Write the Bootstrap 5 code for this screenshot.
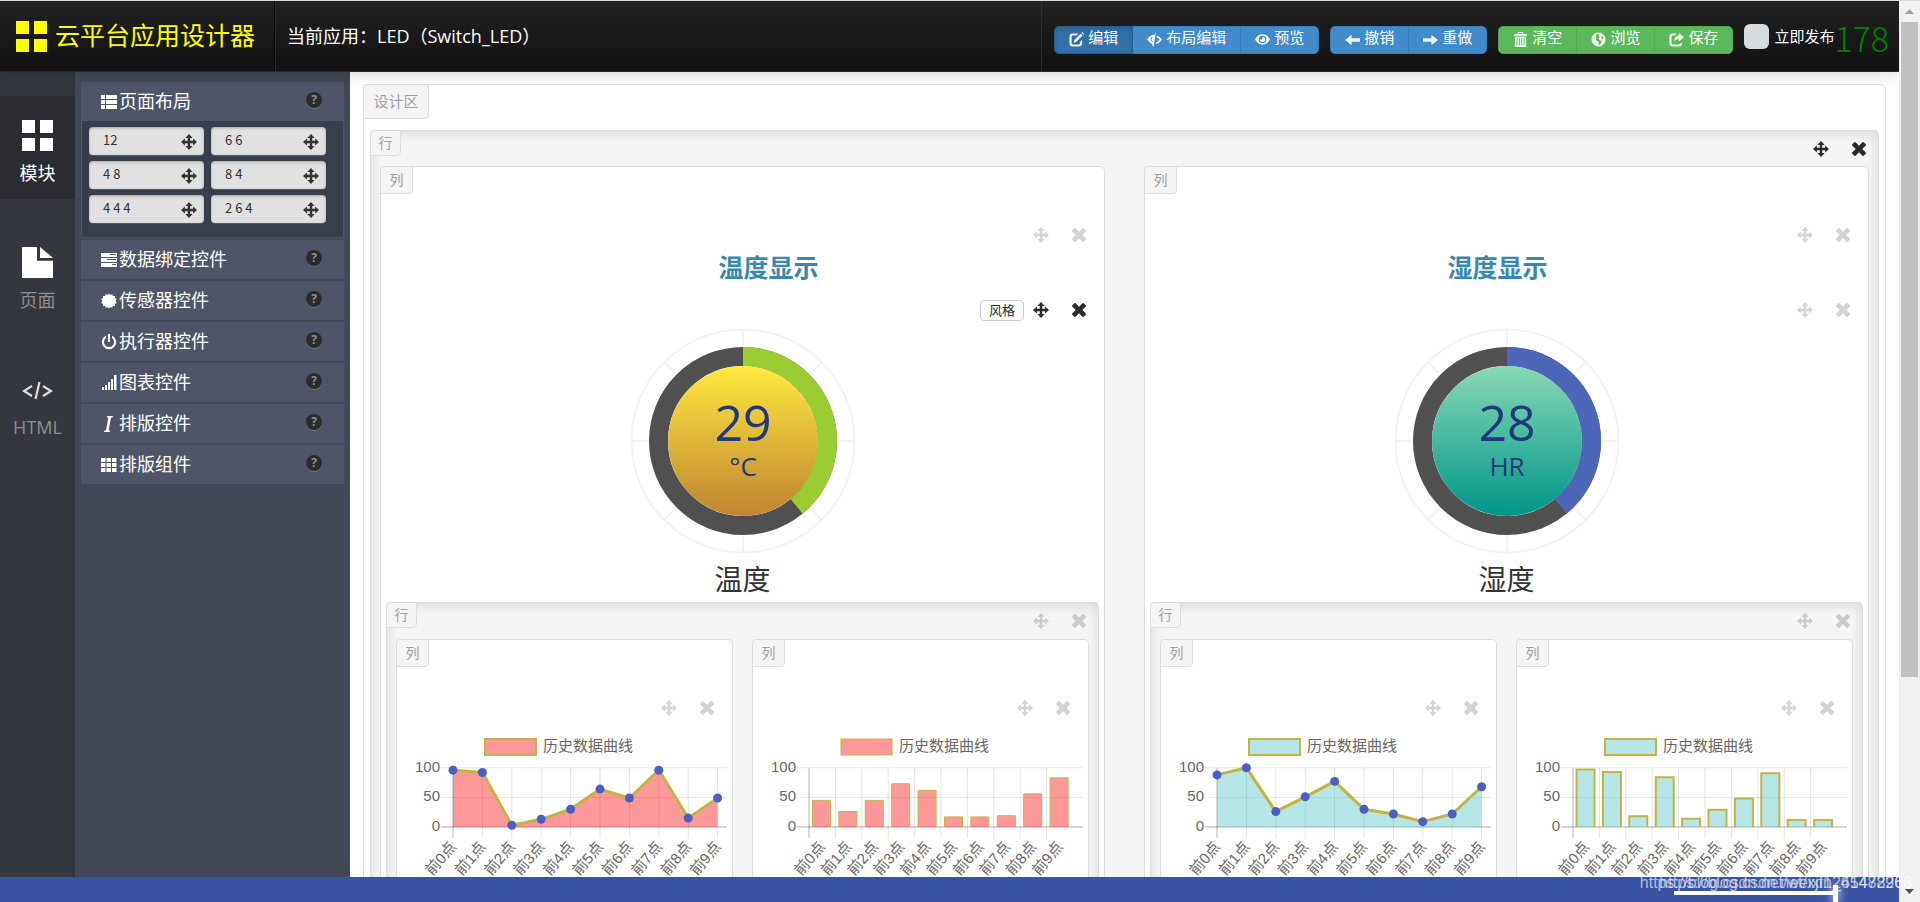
<!DOCTYPE html>
<html lang="zh-CN">
<head>
<meta charset="utf-8">
<meta name="viewport" content="width=device-width, initial-scale=1">
<title>云平台应用设计器</title>
<link href="https://cdn.jsdelivr.net/npm/bootstrap@5.3.0/dist/css/bootstrap.min.css" rel="stylesheet">
<style>
  body { font-family: "Open Sans", "Noto Sans CJK SC", sans-serif; color: #333; background: #fff; border-top: 1px solid #d9dde1; }
  svg { display: block; flex: none; }
  .ico { width: 15px; height: 15px; fill: currentColor; }

  /* top bar */
  .topbar { height: 71px; background: linear-gradient(#222, #111); border-bottom: 1px solid #2b2326; box-shadow: 0 2px 14px rgba(0,0,0,.16); z-index: 3; color: #fff; }
  .brand { color: #ff0; font-size: 25px; width: 275px; padding-left: 16px; gap: 8px; text-decoration: none; border-right: 1px solid #060606; }
  .brand svg { width: 31px; height: 31px; fill: #ff0; }
  .app-name { font-size: 18px; padding-left: 11px; border-left: 1px solid #2e2e2e; }
  .actions { padding: 0 10px 0 12px; border-left: 1px solid #2e2e2e; }
  .actions .btn { --bs-btn-padding-x: 14px; --bs-btn-padding-y: 0; height: 28px; font-size: 15px; line-height: 20px; color: #fff; display: flex; align-items: center; gap: 4px; padding-bottom: 6px; white-space: nowrap; }
  .actions .btn .ico { margin-top: 5px; opacity: .92; }
  .btn-ocean { --bs-btn-bg: #428bca; --bs-btn-border-color: #357ebd; --bs-btn-active-bg: #3071a9; --bs-btn-active-border-color: #285e8e; --bs-btn-border-radius: 5px; }
  .btn-leaf { --bs-btn-bg: #5cb85c; --bs-btn-border-color: #4cae4c; --bs-btn-border-radius: 5px; }
  .btn-ocean.active { box-shadow: inset 0 3px 5px rgba(0,0,0,.125); }
  .gap-groups { gap: 11px; }
  .publish { gap: 5px; font-size: 15px; white-space: nowrap; padding-bottom: 3px; }
  .publish .form-check-input { width: 25px; height: 25px; margin: 0; background-color: #d6dbdf; border: 0; border-radius: 6px; }
  .counter { font-family: "Noto Sans CJK SC", sans-serif; font-weight: 300; font-size: 34px; line-height: 34px; color: green; }

  /* side rail */
  .rail { width: 75px; background: #35373f; padding-top: 24px; gap: 24px; flex: none; }
  .rail a { height: 103px; padding-top: 24px; color: #8f8f8f; font-size: 18px; line-height: 26px; text-decoration: none; gap: 9px; }
  .rail a.active { background: #2b2c31; color: #fff; }
  .rail svg { width: 31px; height: 31px; fill: #fff; }

  /* component palette */
  .palette { width: 275px; background: #424855; padding: 10px 6px; gap: 2px; flex: none; }
  .group-head { height: 39px; background: #4f5566; color: #fff; font-size: 18px; padding: 0 22px 0 20px; border: 0; width: 100%; gap: 2px; white-space: nowrap; }
  .group-head .ico { width: 16px; height: 16px; }
  .help-dot { width: 16px; height: 16px; border-radius: 50%; background: #2c2c2c; color: #8a909e; font-size: 12px; line-height: 16px; font-weight: 700; text-align: center; margin: 0 0 4px auto; box-shadow: 0 1px 0 #6b7183; }
  .group-body { background: #393e4c; border: 1px solid #4f5566; border-top: 0; display: grid; grid-template-columns: 115px 115px; gap: 6px 7px; padding: 6px 7px 14px; margin-top: -2px; }
  .grid-chip { height: 28px; background: #e1e1e1; border: 0; border-radius: 4px; color: #333; font: 13px/24px "Noto Sans CJK SC", sans-serif; padding: 0 7px 2px 14px; box-shadow: inset 0 1px 3px rgba(0,0,0,.25), 0 1px 0 #4f5a6c; }
  .grid-chip .ico { width: 16px; height: 16px; margin-top: 4px; }

  /* design surface */
  .surface { padding: 12px 13px 0; overflow: hidden; min-width: 0; }
  .board { border: 1px solid #ddd; border-radius: 5px; padding-bottom: 30px; min-height: 100%; }
  .tag { background: #f5f5f5; border: 1px solid #ddd; border-radius: 4px 0 4px 0; color: #9da0a4; font-size: 14px; margin: -1px 0 0 -1px; display: inline-block; text-align: center; }
  .tag-board { font-size: 15px; width: 66px; height: 35px; line-height: 33px; }
  .tag-row { width: 31px; height: 26px; line-height: 24px; margin-left: -10px; }
  .tag-col { width: 33px; height: 28px; line-height: 25px; }
  .frame-row { background: #f5f5f5; border: 1px solid #ddd; border-radius: 5px; padding: 0 9px 20px; box-shadow: inset 0 2px 14px rgba(0,0,0,.12); }
  .board > .frame-row { margin: 11px 6px 0; }
  .frame-row > header { height: 35px; padding-right: 3px; }
  .cell .frame-row > header { height: 36px; }
  .cells { display: grid; grid-template-columns: 1fr 1fr; gap: 39px; }
  .cells .cells { gap: 19px; }
  .cell { background: #fff; border: 1px solid #ddd; border-radius: 5px; min-width: 0; padding-bottom: 16px; }
  .cell > .frame-row { margin: 0 5px; }
  .cell > header { height: 56px; }
  .tools { height: 24px; gap: 22px; padding-right: 17px; }
  .tools .ico { width: 16px; height: 16px; }
  .frame-row > header .tools { padding: 0; height: 35px; margin-right: -1px; }
  .tools button { border: 0; background: none; padding: 0; color: #2b2b2b; opacity: .2; }
  .tools.on button { opacity: 1; }
  .tools .style-btn { border: 1px solid #ccc; border-radius: 4px; width: 44px; height: 21px; font-size: 13px; line-height: 18px; margin-right: -13px; }
  .title { font-size: 25px; line-height: 40px; height: 51px; margin: 0; color: #3a87ad; font-weight: 700; text-align: center; }
  .shift-end { padding-left: 52px; }
  .shift-start { padding-right: 18px; }
  .gauge { width: 226px; height: 226px; margin: 6px auto 0; }
  .gauge-name { font-size: 28px; line-height: 45px; padding-top: 3px; text-align: center; margin: 0; }
  .chart { width: 100%; margin-top: 10px; }

  /* footer strip and scroll track */
  .foot { height: 25px; background: #3953a4; z-index: 3; }
  .mark-text { right: 8px; top: -4px; font: 16px/20px "Liberation Sans", sans-serif; color: rgba(255,255,255,.62); white-space: nowrap; }
  .seek { right: 61px; bottom: 7px; width: 164px; height: 4px; background: #fff; }
  .seek-knob { right: 61px; bottom: 0; width: 5px; height: 17px; background: #fff; box-shadow: 0 0 10px #fff; }
  .track { width: 21px; background: #f1f1f1; padding: 8px 2px; flex: none; z-index: 4; }
  .track svg { width: 9px; height: 5px; }
  .thumb { width: 17px; height: 74%; background: #c1c1c1; margin: 8px 0 auto; }
</style>
</head>
<body class="vh-100 overflow-hidden d-flex">

<svg width="0" height="0" class="position-absolute" aria-hidden="true">
  <symbol id="i-grid" viewBox="0 0 31 31"><path d="M0 0h13v13H0zM18 0h13v13H18zM0 18h13v13H0zM18 18h13v13H18z"/></symbol>
  <symbol id="i-move" viewBox="0 0 16 16"><path d="M8 0l3.600 3.900H9.200v2.900h2.900V4.400L16 8l-3.900 3.600V9.200H9.200v2.900h2.400L8 16l-3.600-3.900h2.400V9.200H3.900v2.400L0 8l3.900-3.600v2.400h2.900V3.900H4.400z"/></symbol>
  <symbol id="i-x" viewBox="0 0 16 16"><path d="M4.500 1.200L8 4.700l3.500-3.500q.6-.4 1.200 0l2.100 2.100q.4.600 0 1.200L11.300 8l3.500 3.500q.4.600 0 1.200l-2.100 2.100q-.6.400-1.200 0L8 11.300l-3.500 3.500q-.6.400-1.200 0l-2.100-2.100q-.4-.6 0-1.200L4.700 8 1.200 4.500q-.4-.6 0-1.200l2.100-2.100q.6-.4 1.200 0z"/></symbol>
  <symbol id="i-edit" viewBox="0 0 16 16"><path d="M10 1.500H4Q.5 1.500.5 5v7Q.5 15.500 4 15.500h6.500Q14 15.500 14 12V8.500l-2.300 2.200V12q0 1.200-1.200 1.200H4Q2.800 13.200 2.800 12V5Q2.800 3.800 4 3.800h4z"/><path d="M12.400 1.800l2 2-6.800 6.800-2.700.8.800-2.800zM13.300.9l.9-.9L16 1.900l-.8.900z"/></symbol>
  <symbol id="i-layout" viewBox="0 0 16 16"><path d="M9.500 0L7 16l-1.500-1.700.3-1.600Q2 11.500 0 8q2.800-4.800 8-5z"/><path d="M5.200 5.500Q3.500 8 5.800 10.500" fill="none" stroke="#428bca"/><path d="M10.500 3.700Q14 4.800 16 8q-2.400 4-6.700 5l.5-2Q12 10 13.500 8 12.300 6.200 10.200 5.500z"/></symbol>
  <symbol id="i-eye" viewBox="0 0 16 16"><path fill-rule="evenodd" d="M8 2.500q5.200 0 8 5.500-2.800 5.500-8 5.500T0 8q2.800-5.500 8-5.500zM8 4a4 4 0 1 0 0 8 4 4 0 0 0 0-8zm0 1.200a2.800 2.800 0 1 1-2.800 2.800L7.500 8z"/></symbol>
  <symbol id="i-left" viewBox="0 0 16 16"><path d="M0 8.500l7-5.500v3.700h9v3.600H7V14z"/></symbol>
  <symbol id="i-right" viewBox="0 0 16 16"><path d="M16 8.500L9 3v3.700H0v3.600h9V14z"/></symbol>
  <symbol id="i-trash" viewBox="0 0 16 16"><path fill-rule="evenodd" d="M5 2V0h6v2h4v2H1V2zm1.200 0h3.600V1H6.200zM2 5h12v11H2zm1.800 1.500v8h.9v-8zm2.500 0v8h.9v-8zm2.600 0v8h.9v-8zm2.500 0v8h.9v-8z"/></symbol>
  <symbol id="i-globe" viewBox="0 0 16 16"><path fill-rule="evenodd" d="M8 .5a7.500 7.500 0 1 0 0 15 7.500 7.500 0 0 0 0-15zM6 2l3-.2L8 4l1.500 1L8 6.500l1 2 2.500 1L10 13l-1.500 1L8 10.500 5.500 8.500 5 5zM12 4l1.500 2.500L12 8l-1-2z"/></symbol>
  <symbol id="i-share" viewBox="0 0 16 16"><path d="M8 1.500H4Q.5 1.500.5 5v7Q.5 15.500 4 15.500h6.500Q14 15.500 14 12v-1l-2.300 1.500q-.3.700-1.200.7H4Q2.800 13.200 2.800 12V5Q2.800 3.800 4 3.800h2z"/><path d="M10.500 1L16 5.500 10.500 10V7.500Q7 7.300 5.500 10.500 5.500 4 10.500 3.500z"/></symbol>
  <symbol id="i-list" viewBox="0 0 16 16"><path d="M0 1h4v4H0zM5 1h11v4H5zM0 6h4v4H0zM5 6h11v4H5zM0 11h4v4H0zM5 11h11v4H5z"/></symbol>
  <symbol id="i-tasks" viewBox="0 0 16 16"><path fill-rule="evenodd" d="M0 1h16v4H0zm9 1v1h6V2zM0 6h16v4H0zm6 1v1h9V7zM0 11h16v4H0zm11 1v1h4v-1z"/></symbol>
  <symbol id="i-sensor" viewBox="0 0 16 16"><path d="M8 .5l1.300 1.600L11.200 1l.6 2 2.200-.1-.2 2.100 2 .8L14.700 8l1.100 2.100-2 .8.2 2.200-2.200-.2-.6 2.100-1.900-1.100L8 15.500l-1.300-1.600L4.800 15l-.6-2.100-2.200.2.200-2.200-2-.8L1.300 8 .2 5.800l2-.8L2 2.900l2.200.1.600-2 1.900 1.100z"/></symbol>
  <symbol id="i-power" viewBox="0 0 16 16"><path d="M7 0h2v8H7zM5 1.600v2.500a5 5 0 1 0 6 0V1.600a7.200 7.200 0 1 1-6 0z"/></symbol>
  <symbol id="i-signal" viewBox="0 0 16 16"><path d="M1 12h2v3H1zM4 10h2v5H4zM7 7h2v8H7zM10 4h2v11h-2zM13 0h2.500v15H13z"/></symbol>
  <symbol id="i-italic" viewBox="0 0 16 16"><path d="M6 0h6l-.3 1.200-1.700.5L7.700 14.200l1.400.6L8.800 16H3l.3-1.200 1.700-.6L7.300 1.700 5.700 1.200z"/></symbol>
  <symbol id="i-nine" viewBox="0 0 16 16"><path d="M0 1h4.500v4H0zM5.500 1H10v4H5.500zM11 1h4.500v4H11zM0 6h4.500v4H0zM5.500 6H10v4H5.500zM11 6h4.500v4H11zM0 11h4.500v4H0zM5.500 11H10v4H5.500zM11 11h4.500v4H11z"/></symbol>
</svg>

<div class="d-flex flex-column flex-grow-1" style="min-width:0">
  <nav class="topbar d-flex position-relative flex-shrink-0">
    <a class="brand d-flex align-items-center flex-shrink-0" href="#"><svg><use href="#i-grid"/></svg>云平台应用设计器</a>
    <div class="app-name d-flex align-items-center flex-grow-1 text-nowrap">当前应用：LED（Switch_LED）</div>
    <div class="actions d-flex align-items-center gap-groups pb-1">
      <div class="btn-group pt-2 mt-1">
        <button class="btn btn-ocean active" type="button"><svg class="ico"><use href="#i-edit"/></svg>编辑</button>
        <button class="btn btn-ocean" type="button"><svg class="ico"><use href="#i-layout"/></svg>布局编辑</button>
        <button class="btn btn-ocean" type="button"><svg class="ico"><use href="#i-eye"/></svg>预览</button>
      </div>
      <div class="btn-group pt-2 mt-1">
        <button class="btn btn-ocean" type="button"><svg class="ico"><use href="#i-left"/></svg>撤销</button>
        <button class="btn btn-ocean" type="button"><svg class="ico"><use href="#i-right"/></svg>重做</button>
      </div>
      <div class="btn-group pt-2 mt-1">
        <button class="btn btn-leaf" type="button"><svg class="ico"><use href="#i-trash"/></svg>清空</button>
        <button class="btn btn-leaf" type="button"><svg class="ico"><use href="#i-globe"/></svg>浏览</button>
        <button class="btn btn-leaf" type="button"><svg class="ico"><use href="#i-share"/></svg>保存</button>
      </div>
      <div class="d-flex align-items-center pt-2">
        <div class="publish d-flex align-items-center">
          <input class="form-check-input" type="checkbox" id="publish"><label for="publish">立即发布</label>
        </div>
        <span class="counter">178</span>
      </div>
    </div>
  </nav>

  <div class="d-flex flex-grow-1" style="min-height:0">
    <nav class="rail d-flex flex-column">
      <a class="active d-flex flex-column align-items-center" href="#"><svg><use href="#i-grid"/></svg>模块</a>
      <a class="d-flex flex-column align-items-center" href="#"><svg viewBox="0 0 31 34" preserveAspectRatio="none"><path d="M0 0h15v15h16v19H0zM18 0l13 12H18z"/></svg>页面</a>
      <a class="d-flex flex-column align-items-center" href="#"><svg viewBox="0 0 31 31"><path d="M10 12L2 17l8 5M21 12l8 5-8 5M17.500 8l-4 17" fill="none" stroke="#ddd" stroke-width="2.200"/></svg>HTML</a>
    </nav>

    <aside class="palette d-flex flex-column">
      <button class="group-head d-flex align-items-center" type="button"><svg class="ico"><use href="#i-list"/></svg>页面布局<span class="help-dot">?</span></button>
      <div class="group-body">
        <button class="grid-chip d-flex justify-content-between align-items-center" type="button">12<svg class="ico"><use href="#i-move"/></svg></button>
        <button class="grid-chip d-flex justify-content-between align-items-center" type="button">6 6<svg class="ico"><use href="#i-move"/></svg></button>
        <button class="grid-chip d-flex justify-content-between align-items-center" type="button">4 8<svg class="ico"><use href="#i-move"/></svg></button>
        <button class="grid-chip d-flex justify-content-between align-items-center" type="button">8 4<svg class="ico"><use href="#i-move"/></svg></button>
        <button class="grid-chip d-flex justify-content-between align-items-center" type="button">4 4 4<svg class="ico"><use href="#i-move"/></svg></button>
        <button class="grid-chip d-flex justify-content-between align-items-center" type="button">2 6 4<svg class="ico"><use href="#i-move"/></svg></button>
      </div>
      <button class="group-head d-flex align-items-center" type="button"><svg class="ico"><use href="#i-tasks"/></svg>数据绑定控件<span class="help-dot">?</span></button>
      <button class="group-head d-flex align-items-center" type="button"><svg class="ico"><use href="#i-sensor"/></svg>传感器控件<span class="help-dot">?</span></button>
      <button class="group-head d-flex align-items-center" type="button"><svg class="ico"><use href="#i-power"/></svg>执行器控件<span class="help-dot">?</span></button>
      <button class="group-head d-flex align-items-center" type="button"><svg class="ico"><use href="#i-signal"/></svg>图表控件<span class="help-dot">?</span></button>
      <button class="group-head d-flex align-items-center" type="button"><svg class="ico"><use href="#i-italic"/></svg>排版控件<span class="help-dot">?</span></button>
      <button class="group-head d-flex align-items-center" type="button"><svg class="ico"><use href="#i-nine"/></svg>排版组件<span class="help-dot">?</span></button>
    </aside>

    <main class="surface flex-grow-1">
      <div class="board">
        <span class="tag tag-board d-block">设计区</span>
        <section class="frame-row">
          <header class="d-flex justify-content-between align-items-start"><span class="tag tag-row">行</span><div class="tools on d-flex align-items-center" data-tools></div></header>
          <div class="cells">
            <div class="cell">
              <header><span class="tag tag-col">列</span></header>
              <div class="tools d-flex align-items-center justify-content-end" data-tools></div>
              <h2 class="title shift-end">温度显示</h2>
              <div class="tools on d-flex align-items-center justify-content-end" data-tools><button class="style-btn" type="button">风格</button></div>
              <svg class="gauge" viewBox="-113 -113 226 226" data-value="29" data-unit="°C" data-arc="#9acd32" data-from="#ffe93f" data-to="#bf8433"></svg>
              <p class="gauge-name">温度</p>
              <section class="frame-row">
                <header class="d-flex justify-content-between align-items-start"><span class="tag tag-row">行</span><div class="tools d-flex align-items-center" data-tools></div></header>
                <div class="cells">
                  <div class="cell">
                    <header><span class="tag tag-col">列</span></header>
                    <div class="tools d-flex align-items-center justify-content-end" data-tools></div>
                    <svg class="chart" viewBox="0 0 335 170" data-kind="line" data-fill="#ff000066" data-stroke="3" data-values="96,92,3,13,30,64,49,96,15,49"></svg>
                  </div>
                  <div class="cell">
                    <header><span class="tag tag-col">列</span></header>
                    <div class="tools d-flex align-items-center justify-content-end" data-tools></div>
                    <svg class="chart" viewBox="0 0 335 170" data-kind="bar" data-fill="#ff000066" data-stroke="1" data-values="45,26,45,73,62,17,17,19,56,83"></svg>
                  </div>
                </div>
              </section>
            </div>
            <div class="cell">
              <header><span class="tag tag-col">列</span></header>
              <div class="tools d-flex align-items-center justify-content-end" data-tools></div>
              <h2 class="title shift-start">湿度显示</h2>
              <div class="tools d-flex align-items-center justify-content-end" data-tools></div>
              <svg class="gauge" viewBox="-113 -113 226 226" data-value="28" data-unit="HR" data-arc="#4d67b8" data-from="#88d9b5" data-to="#00958a"></svg>
              <p class="gauge-name">湿度</p>
              <section class="frame-row">
                <header class="d-flex justify-content-between align-items-start"><span class="tag tag-row">行</span><div class="tools d-flex align-items-center" data-tools></div></header>
                <div class="cells">
                  <div class="cell">
                    <header><span class="tag tag-col">列</span></header>
                    <div class="tools d-flex align-items-center justify-content-end" data-tools></div>
                    <svg class="chart" viewBox="0 0 335 170" data-kind="line" data-fill="#4bc0c066" data-stroke="3" data-values="88,100,26,51,77,30,22,9,22,68"></svg>
                  </div>
                  <div class="cell">
                    <header><span class="tag tag-col">列</span></header>
                    <div class="tools d-flex align-items-center justify-content-end" data-tools></div>
                    <svg class="chart" viewBox="0 0 335 170" data-kind="bar" data-fill="#4bc0c066" data-stroke="3" data-values="97,93,18,84,14,29,48,91,12,12"></svg>
                  </div>
                </div>
              </section>
            </div>
          </div>
        </section>
      </div>
    </main>
  </div>

  <footer class="foot position-relative flex-shrink-0">
    <div class="seek position-absolute"></div>
    <div class="seek-knob position-absolute"></div>
  </footer>
</div>

<div class="track d-flex flex-column align-items-center">
  <svg viewBox="0 0 9 5"><path d="M4.500 0L9 5H0z" fill="#a3a3a3"/></svg>
  <div class="thumb"></div>
  <svg viewBox="0 0 9 5"><path d="M0 0h9L4.500 5z" fill="#505050"/></svg>
</div>

<div class="position-absolute bottom-0 end-0" style="height:25px;z-index:5">
  <span class="mark-text position-absolute">https://blog.csdn.net/weixin_41488268</span>
  <span class="mark-text position-absolute">https://blog.csdn.net/xjf1265472963</span>
</div>

<script src="https://cdn.jsdelivr.net/npm/bootstrap@5.3.0/dist/js/bootstrap.bundle.min.js"></script>
<script>
  // drag and remove handles
  document.querySelectorAll('[data-tools]').forEach(function (el) {
    el.insertAdjacentHTML('beforeend',
      '<button type="button" aria-label="移动"><svg class="ico"><use href="#i-move"/></svg></button>' +
      '<button type="button" aria-label="删除"><svg class="ico"><use href="#i-x"/></svg></button>');
  });

  // round gauges
  document.querySelectorAll('.gauge').forEach(function (el, i) {
    var d = el.dataset, a = 140.6 * Math.PI / 180, s = '';
    s += '<defs><linearGradient id="g' + i + '" x1="0" y1="0" x2="0" y2="1"><stop stop-color="' + d.from + '"/><stop offset="1" stop-color="' + d.to + '"/></linearGradient></defs>';
    s += '<circle r="111.500" fill="none" stroke="#f2f2f2" stroke-width="2"/>';
    for (var k = 0; k < 8; k++) s += '<path d="M0-112V-96" stroke="#f2f2f2" stroke-width="2" transform="rotate(' + k * 45 + ')"/>';
    s += '<circle r="84.500" fill="none" stroke="#505050" stroke-width="19"/>';
    s += '<path d="M0-84.500A84.500 84.500 0 0 1 ' + 84.5 * Math.sin(a) + ' ' + -84.5 * Math.cos(a) + '" fill="none" stroke="' + d.arc + '" stroke-width="19"/>';
    s += '<circle r="75" fill="url(#g' + i + ')"/>';
    s += '<text text-anchor="middle" fill="#20387c" font-size="50" y="0">' + d.value + '</text>';
    s += '<text text-anchor="middle" fill="#20387c" font-size="26" y="35">' + d.unit + '</text>';
    el.innerHTML = s;
  });

  // history charts
  document.querySelectorAll('.chart').forEach(function (el) {
    var d = el.dataset, v = d.values.split(',').map(Number), line = d.kind === 'line';
    var x0 = 56, right = 330, base = 97, sw = +d.stroke, step = line ? 29.4 : 26.4, s = '', pts = [];
    var y = function (n) { return base - n * .592; };
    var font = ' font-family="Liberation Sans, Noto Sans CJK SC, sans-serif" fill="#666"';
    s += '<rect x="88" y="9" width="51" height="16" fill="' + d.fill + '" stroke="#c2b344" stroke-width="' + Math.min(sw, 2) + '"/>';
    s += '<text x="146" y="21" font-size="15"' + font + '>历史数据曲线</text>';
    [0, 50, 100].forEach(function (n) {
      s += '<path d="M44 ' + y(n) + 'H' + right + '" stroke="#000" stroke-opacity="' + (n ? .1 : .22) + '"' + (n ? '' : ' stroke-width="1.500"') + '/>';
      s += '<text x="43" y="' + (y(n) + 4) + '" text-anchor="end" font-size="15"' + font + '>' + n + '</text>';
    });
    v.forEach(function (n, i) {
      var x = x0 + i * step, lx = x + (line ? 4 : 17);
      pts.push(x + ' ' + y(n));
      s += '<path d="M' + x + ' 38V108" stroke="#000" stroke-opacity="' + (i ? .11 : .3) + '"/>';
      s += '<text transform="translate(' + lx + ' 117) rotate(-50)" text-anchor="end" font-size="15"' + font + '>前' + i + '点</text>';
      if (!line) {
        s += '<rect x="' + (x + 3.5) + '" y="' + y(n) + '" width="18" height="' + (base - y(n)) + '" fill="' + d.fill + '"/>';
        s += '<path d="M' + (x + 3.5) + ' ' + base + 'V' + y(n) + 'h18V' + base + '" fill="none" stroke="#c2b344" stroke-width="' + Math.min(sw, 2) + '"/>';
      }
    });
    if (line) {
      s += '<path d="M' + x0 + ' ' + base + 'L' + pts.join('L') + 'V' + base + 'z" fill="' + d.fill + '"/>';
      s += '<path d="M' + pts.join('L') + '" fill="none" stroke="#c2b344" stroke-width="' + sw + '"/>';
      pts.forEach(function (p) { p = p.split(' '); s += '<circle cx="' + p[0] + '" cy="' + p[1] + '" r="4.500" fill="#4a5fc1"/>'; });
    }
    el.innerHTML = s;
  });
</script>
</body>
</html>
